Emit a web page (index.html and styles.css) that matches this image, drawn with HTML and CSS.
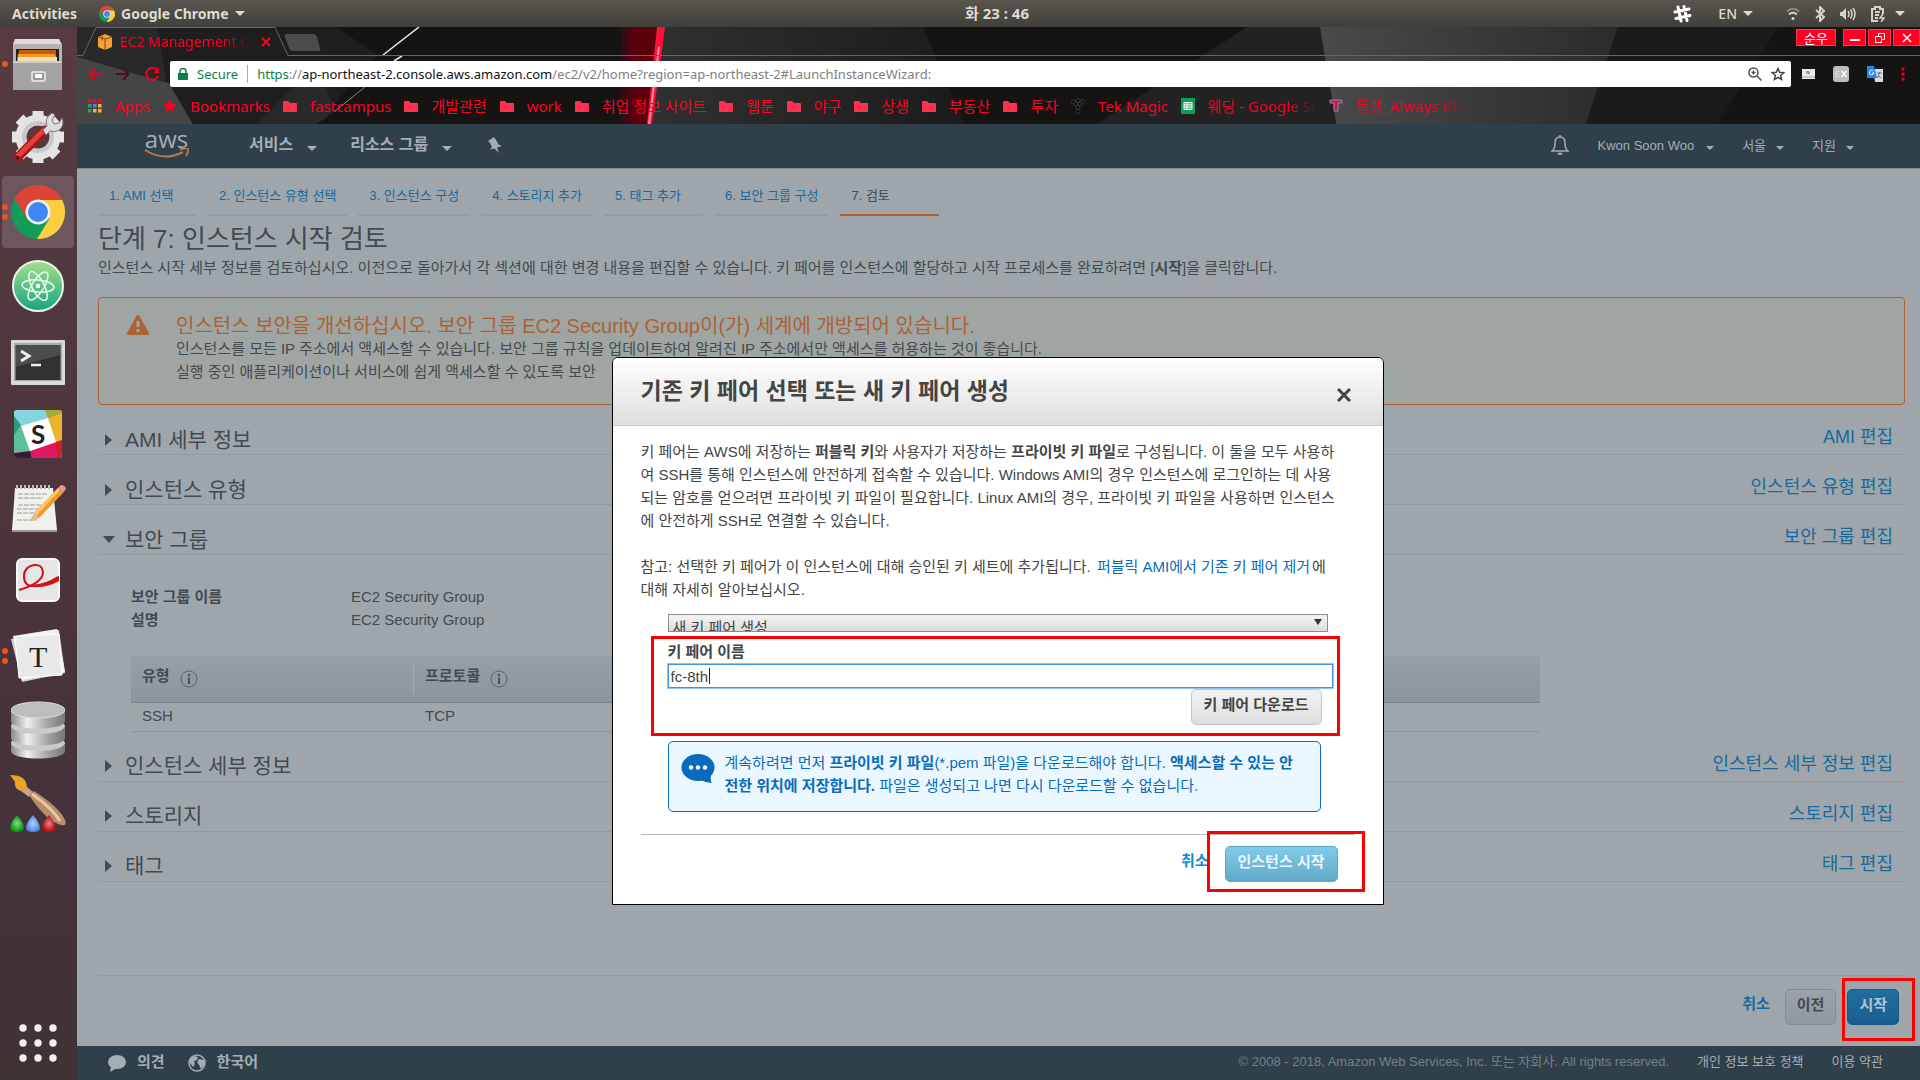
FILE: index.html
```
<!DOCTYPE html>
<html lang="ko">
<head>
<meta charset="utf-8">
<title>EC2 Management Console</title>
<link rel="stylesheet" href="styles.css">
</head>
<body>
<svg class="defs" width="0" height="0" aria-hidden="true">
  <defs>
    <symbol id="folder" viewBox="0 0 14 14"><path d="M0 3q0-1 1-1h4l2 2h6q1 0 1 1v7q0 1-1 1H1q-1 0-1-1z" fill="#ff2f4e"/></symbol>
    <symbol id="chrome" viewBox="0 0 54 54">
      <circle cx="27" cy="27" r="27" fill="#109d58"/>
      <path d="M3.600 13.500A27 27 0 0 1 50.400 13.500L52 15H27L15.500 33.500z" fill="#db4437"/>
      <path d="M51.200 15A27 27 0 0 1 26 54L38.500 33.500 27 15z" fill="#ffcd40"/>
      <circle cx="27" cy="27" r="12.500" fill="#f1f1f1"/><circle cx="27" cy="27" r="10" fill="#4285f4"/>
    </symbol>
    <symbol id="info" viewBox="0 0 18 18"><circle cx="9" cy="9" r="8" fill="none" stroke="#5d656b" stroke-width="1"/><path d="M9 7.500V14" stroke="#474f55" stroke-width="2"/><circle cx="9" cy="5" r="1.300" fill="#474f55"/></symbol>
  </defs>
</svg>

<header class="topbar">
  <div class="top-left">
    <span>Activities</span>
    <span class="app-menu"><svg width="16" height="16"><use href="#chrome"/></svg>Google Chrome<i class="tri"></i></span>
  </div>
  <time class="clock">화 23 : 46</time>
  <div class="top-right">
    <svg width="20" height="20" viewBox="0 0 20 20" stroke="#fff" stroke-width="3" stroke-linecap="round"><path d="M6 3l3 14M12 2.500l3 14M3 8l14-3M4 14.500l14-3"/></svg>
    <span class="lang">EN<i class="tri"></i></span>
    <svg width="14" height="14" viewBox="0 0 14 14" fill="none" stroke="#d4d2cc" stroke-width="2"><path d="M1 4.500Q7-1 13 4.500" stroke="#8e8b83"/><path d="M3 7.500Q7 4 11 7.500"/><circle cx="7" cy="11.500" r="1.500" fill="#d4d2cc" stroke="none"/></svg>
    <svg width="10" height="16" viewBox="0 0 10 16" fill="none" stroke="#d4d2cc" stroke-width="2"><path d="M1 4l8 7-4 4V1l4 4-8 7"/></svg>
    <svg width="16" height="14" viewBox="0 0 16 14" fill="none" stroke="#d4d2cc" stroke-width="1.500"><path d="M0 5h2l4-4v12L2 9H0z" fill="#d4d2cc" stroke="none"/><path d="M8 4q2 3 0 6M10.500 2.500q3 4.500 0 9M13 1q4 6 0 12"/></svg>
    <svg width="14" height="16" viewBox="0 0 14 16" fill="none" stroke="#d4d2cc" stroke-width="2"><path d="M12 8V3H9V1H4v2H1v12h6M4 6h5M4 9h4M4 12h3"/><path d="M12 8l-3 4h4l-3 4" stroke-width="1.500"/></svg>
    <i class="tri"></i>
  </div>
</header>

<div class="desktop">
<nav class="dock" aria-label="Launcher">
  <button class="launch one" aria-label="Files"><svg width="54" height="54" viewBox="0 0 54 54"><path d="M4 2h44l3 5v45H2V6z" fill="#b3b3b3"/><path d="M4 2h44l2 5H3z" fill="#dcdcdc"/><path d="M5 12h43v12H5z" fill="#222"/><path d="M8 13h37v12H7z" fill="#c85a10"/><path d="M7 17h36l2 2v6H6z" fill="#f39a2d"/><path d="M7 20h39v4H7z" fill="#f8dfae"/><path d="M2 24h49v29H2z" fill="#a3a3a3"/><path d="M2 24h49v2H2z" fill="#ccc"/><rect x="21" y="35" width="13" height="9" rx="2" fill="#999" stroke="#ddd" stroke-width="2"/><rect x="24" y="37" width="7" height="4" fill="#fff"/></svg></button>
  <button class="launch" aria-label="Settings"><svg width="54" height="54" viewBox="0 0 54 54"><circle cx="27" cy="26" r="17" fill="none" stroke="#e4e4e4" stroke-width="11"/><path d="M27 0v9M27 43v9M1 26h9M44 26h9M8.500 7.500l7 7M38.500 37.500l7 7M8.500 44.500l7-7M38.500 14.500l7-7" stroke="#e4e4e4" stroke-width="11"/><circle cx="27" cy="26" r="14" fill="none" stroke="#c8c8c8" stroke-width="4"/><path d="M7 46L34 19" stroke="#a61818" stroke-width="9" stroke-linecap="round"/><path d="M7 45L33 19" stroke="#e0413a" stroke-width="5" stroke-linecap="round"/><circle cx="6.500" cy="46.500" r="2" fill="#631414"/><path d="M32 19l4-4q-3-8 5-13l3 2-3 5 2 4 5-1 3-5q3 8-3 12-4 3-9 1l-4 4z" fill="#ddd" stroke="#777" stroke-width="1"/></svg></button>
  <button class="launch two active" aria-label="Google Chrome"><svg width="54" height="54"><use href="#chrome"/></svg></button>
  <button class="launch" aria-label="Atom"><svg width="52" height="52" viewBox="0 0 52 52"><defs><linearGradient id="atom" x2="0" y2="1"><stop stop-color="#a8dd8d"/><stop offset="1" stop-color="#14a77c"/></linearGradient></defs><circle cx="26" cy="26" r="25" fill="url(#atom)" stroke="#e8f4ec" stroke-width="2"/><g fill="none" stroke="#ecfbef" stroke-width="1.500"><ellipse cx="26" cy="26" rx="16" ry="6" transform="rotate(5 26 26)"/><ellipse cx="26" cy="26" rx="16" ry="6" transform="rotate(62 26 26)"/><ellipse cx="26" cy="26" rx="16" ry="6" transform="rotate(122 26 26)"/></g><circle cx="26" cy="26" r="2.200" fill="#fff"/></svg></button>
  <button class="launch" aria-label="Terminal"><svg width="54" height="52" viewBox="0 -6 54 52"><rect width="54" height="45" rx="1" fill="#d9d9d9"/><rect x="3" y="3" width="48" height="38" fill="#aaa"/><rect x="4.500" y="5" width="45" height="35" fill="#2f3132"/><path d="M5 5h44v10L5 27z" fill="#4a4c4d"/><path d="M10 11l8 5-8 5" fill="none" stroke="#eee" stroke-width="3"/><path d="M20 25h10" stroke="#eee" stroke-width="2.500"/></svg></button>
  <button class="launch" aria-label="Slack"><svg width="48" height="48" viewBox="0 0 48 48"><rect width="48" height="48" rx="3" fill="#ecb32d"/><path d="M0 3q0-3 3-3h28l3 8L7 16 0 14z" fill="#85d5e0"/><path d="M31 0h14q3 0 3 3L34 8z" fill="#9fae3b"/><path d="M0 14l7 2 9 25-16 2z" fill="#5cc09b"/><path d="M0 6l7 9-7 10z" fill="#2c9a78"/><path d="M16 41l27-9 5 16H18z" fill="#e01765"/><path d="M42 32l6-2v15l-5 3z" fill="#d01d28"/><path d="M0 43l16-2 2 7H3q-3 0-3-3z" fill="#391a3a"/><path d="M7 16l27-8 8 24-26 9z" fill="#fff"/><text x="17" y="34" class="slack-s">S</text></svg></button>
  <button class="launch" aria-label="Text Editor"><svg width="56" height="50" viewBox="0 0 56 50"><path d="M5 5h38l4 42H2z" fill="#f1f1ec"/><path d="M2 47h45v2H2z" fill="#9a9a93"/><path d="M7 6V2M11 6V2M15 6V2M19 6V2M23 6V2M27 6V2M31 6V2M35 6V2M39 6V2" stroke="#bbb" stroke-width="2"/><path d="M8 11h30M8 15h25M8 22h26M7 26h28M7 30h25M7 37h20" stroke="#b9b9b2" stroke-width="1.500" stroke-dasharray="5 1"/><path d="M20 38l5-9L48 5l5 5-24 25z" fill="#f19a2c"/><path d="M25 29l23-24 2 2-24 26z" fill="#ffc46b"/><path d="M48 5l3-3q4 0 5 4l-3 4z" fill="#e59595"/><path d="M20 38l5-9 4 6z" fill="#d7c09a"/></svg></button>
  <button class="launch" aria-label="Document Viewer"><svg width="44" height="48" viewBox="0 0 44 48"><rect x="1" y="1" width="42" height="42" rx="5" fill="#e6e6e6" stroke="#f8f8f8" stroke-width="2"/><path d="M3 32Q27 25 27 14 26 6 18 7 8 9 8 18 8 28 17 28 30 27 42 19" fill="none" stroke="#d1121a" stroke-width="2"/><path d="M17 27q13-1 26-9v5q-12 7-26 6z" fill="#d1121a"/></svg></button>
  <button class="launch two" aria-label="Typora"><svg width="56" height="54" viewBox="0 0 56 54"><path d="M1 10l48-9 6 43-43 9z" fill="#d5d5d5"/><path d="M3 7l44-7 8 43-43 8z" fill="#f3f3f3"/><path d="M5 8l44-3 3 41-43 3z" fill="#e9e9e9" stroke="#fff"/><text x="19" y="38" class="typora-t">T</text></svg></button>
  <button class="launch" aria-label="Database"><svg width="54" height="58" viewBox="0 0 54 58"><defs><linearGradient id="db"><stop stop-color="#8a8a8a"/><stop offset=".3" stop-color="#efefef"/><stop offset=".7" stop-color="#a0a0a0"/><stop offset="1" stop-color="#777"/></linearGradient></defs><path d="M0 42v8c0 10 54 10 54 0v-8z" fill="url(#db)"/><ellipse cx="27" cy="42" rx="27" ry="8" fill="#c9c9c9"/><path d="M0 26v11c0 10 54 10 54 0V26z" fill="url(#db)"/><ellipse cx="27" cy="25" rx="27" ry="8" fill="#c9c9c9"/><path d="M0 9v11c0 10 54 10 54 0V9z" fill="url(#db)"/><ellipse cx="27" cy="9" rx="27" ry="8" fill="#bdbdbd" stroke="#dcdcdc"/></svg></button>
  <button class="launch" aria-label="Paint"><svg width="58" height="60" viewBox="0 0 58 60"><defs><radialGradient id="dg"><stop stop-color="#7be07f"/><stop offset="1" stop-color="#0a8f12"/></radialGradient><radialGradient id="dbl"><stop stop-color="#b7d4ff"/><stop offset="1" stop-color="#4a86ea"/></radialGradient><radialGradient id="dr"><stop stop-color="#f07f7f"/><stop offset="1" stop-color="#b00b10"/></radialGradient></defs><path d="M1 1q17 0 17 13l-6 3Q5 15 6 8z" fill="#e8a426"/><path d="M12 17l6-4 6 5-4 5z" fill="#c7a487"/><path d="M20 21l5-4q26 17 31 29 3 8-7 4-14-6-29-29z" fill="#b98d68"/><path d="M23 20q20 14 28 27" stroke="#e5c7a5" stroke-width="3" fill="none"/><path d="M8 41q-14 17 0 17t0-17z" fill="url(#dg)"/><path d="M24 41q-14 17 0 17t0-17z" fill="url(#dbl)"/><path d="M40 41q-14 17 0 17t0-17z" fill="url(#dr)"/></svg></button>
  <button class="apps" aria-label="Show Applications"><svg width="38" height="38" viewBox="0 0 38 38" fill="#f1f0ee"><circle cx="4" cy="4" r="3.700"/><circle cx="19" cy="4" r="3.700"/><circle cx="34" cy="4" r="3.700"/><circle cx="4" cy="19" r="3.700"/><circle cx="19" cy="19" r="3.700"/><circle cx="34" cy="19" r="3.700"/><circle cx="4" cy="34" r="3.700"/><circle cx="19" cy="34" r="3.700"/><circle cx="34" cy="34" r="3.700"/></svg></button>
</nav>

<div class="window">
<div class="browser">
  <svg class="theme" viewBox="0 0 1843 97" preserveAspectRatio="none" aria-hidden="true">
    <defs>
      <linearGradient id="g1"><stop stop-color="#303030"/><stop offset="1" stop-color="#1b1b1b"/></linearGradient>
      <linearGradient id="g2"><stop stop-color="#4a4a4a"/><stop offset="1" stop-color="#2b2b2b"/></linearGradient>
      <linearGradient id="g3"><stop stop-color="#191515"/><stop offset=".4" stop-color="#5c000e"/><stop offset="1" stop-color="#5c000e"/></linearGradient>
    </defs>
    <rect width="1843" height="97" fill="#151413"/>
    <path d="M0 15L50 40 92 56 116 97H0z" fill="#454545"/>
    <path d="M70 0h190l40 28-60 69H116L92 56z" fill="#1e1e1e"/>
    <path d="M0 0h80l10 56L0 30z" fill="#292929"/>
    <path d="M258 84L240 97H180l60-60z" fill="#292929"/>
    <path d="M545 0h35l-9 97h-30z" fill="url(#g3)"/>
    <path d="M584 0h262l42 97H573z" fill="url(#g1)"/>
    <path d="M1170 0h74l14 97H1020z" fill="#222"/>
    <path d="M1243 0h298l-32 97h-250z" fill="url(#g2)"/>
    <path d="M1541 0h160l-60 97h-132z" fill="#1b1b1b"/>
    <path d="M342 0l-36 28M325 29l-8 5" stroke="#eee" stroke-width="1.500"/>
    <path d="M288 60l-30 24" stroke="#888"/>
    <path d="M580 0h8l-13 97h-5z" fill="#ff1238"/>
    <path d="M582 20l-10 77" stroke="#ff8aa0" stroke-width="2"/>
    <path d="M0 28.500H6L19 .5H198L211 28.500H1843" fill="none" stroke="#666"/>
    <path d="M209 7h27q3 0 4 3l3 11q1 3-2 3h-25q-3 0-4-3l-4-11q-1-3 1-3z" fill="#4c4c4c"/>
  </svg>
  <div class="tabstrip">
    <div class="tab">
      <svg width="14" height="16" viewBox="0 0 14 16"><path d="M0 3l7-3 7 3v10l-7 3-7-3z" fill="#f7a134"/><path d="M0 3l7 2 7-2M7 5v11M4 1.500v5" stroke="#7b4a0d" fill="none"/></svg>
      <span class="tab-title">EC2 Management Console</span>
      <button class="tab-close" aria-label="Close tab"><svg width="10" height="10" viewBox="0 0 10 10" stroke="#ff0022" stroke-width="2"><path d="M1 1l8 8M9 1L1 9"/></svg></button>
    </div>
    <div class="win-buttons">
      <button class="user">순우</button>
      <button aria-label="Minimize"><svg width="10" height="10" viewBox="0 0 10 10"><path d="M0 7h10" stroke="#fff" stroke-width="2"/></svg></button>
      <button aria-label="Restore"><svg width="10" height="10" viewBox="0 0 10 10" fill="none" stroke="#fff"><path d="M.5 3.500h6v6h-6zM3.500 3V.5h6v6H7"/></svg></button>
      <button class="close" aria-label="Close"><svg width="10" height="10" viewBox="0 0 10 10" stroke="#fff" stroke-width="1.500"><path d="M1 1l8 8M9 1L1 9"/></svg></button>
    </div>
  </div>
  <div class="toolbar">
    <button aria-label="Back"><svg width="14" height="14" viewBox="0 0 14 14" fill="none" stroke="#f00020" stroke-width="2"><path d="M14 7H2M7 1L1.500 7 7 13"/></svg></button>
    <button aria-label="Forward"><svg width="14" height="14" viewBox="0 0 14 14" fill="none" stroke="#4e1018" stroke-width="2"><path d="M0 7h12M7 1l5.500 6L7 13"/></svg></button>
    <button aria-label="Reload"><svg width="16" height="16" viewBox="0 0 16 16" fill="none" stroke="#f00020" stroke-width="2"><path d="M14 10A6 6 0 1 1 13 4"/><path d="M15 1v6H9z" fill="#f00020" stroke="none"/></svg></button>
    <div class="address">
      <svg width="10" height="12" viewBox="0 0 10 12"><path d="M0 5h10v7H0z" fill="#0b8043"/><path d="M2 5V3.500a3 3 0 0 1 6 0V5" fill="none" stroke="#0b8043" stroke-width="1.500"/></svg>
      <span class="secure">Secure</span>
      <span class="url"><b class="secure">https</b>://<b>ap-northeast-2.console.aws.amazon.com</b>/ec2/v2/home?region=ap-northeast-2#LaunchInstanceWizard:</span>
      <svg width="14" height="14" viewBox="0 0 14 14" fill="none" stroke="#505050" stroke-width="1.500"><circle cx="5.500" cy="5.500" r="4.500"/><path d="M9 9l4.500 4.500M3.500 5.500h4M5.500 3.500v4"/></svg>
      <svg width="14" height="14" viewBox="0 0 14 14" fill="none" stroke="#444" stroke-width="1.500"><path d="M7 1.500l1.700 3.800 4 .4-3 2.700.9 4.100L7 10.400l-3.600 2.100.9-4.100-3-2.700 4-.4z"/></svg>
    </div>
    <div class="extensions">
      <svg width="13" height="10" viewBox="0 0 13 10"><path d="M0 0h13v10H0z" fill="#e9e9e9"/><path d="M0 8h13" stroke="#aaa"/><path d="M5 5V2l2 3V2" stroke="#777" fill="none"/></svg>
      <svg width="16" height="16" viewBox="0 0 16 16"><rect width="16" height="16" rx="3" fill="#bdbdbd"/><path d="M6.500 5.500H3v5h3.500M3 8h3" stroke="#ddd" fill="none"/><path d="M8.500 5l5 6M13.500 5l-5 6" stroke="#fff" stroke-width="1.500" fill="none"/></svg>
      <svg width="16" height="16" viewBox="0 0 16 16"><path d="M6 3h10v13H8z" fill="#d5dbe0"/><path d="M0 0h7l3 12H0z" fill="#1e88f0"/><path d="M6.500 5A2.300 2.300 0 1 0 7 7H5" stroke="#fff" fill="none"/><path d="M10 7h5M12.500 6v1l-2 5M11 9l3 3" stroke="#5b7480" fill="none"/></svg>
      <svg width="4" height="14" viewBox="0 0 4 14" fill="#e00020"><circle cx="2" cy="2" r="1.700"/><circle cx="2" cy="7" r="1.700"/><circle cx="2" cy="12" r="1.700"/></svg>
    </div>
  </div>
  <nav class="bookmarks" aria-label="Bookmarks">
    <a href="#"><svg width="14" height="14" viewBox="0 0 14 14"><path d="M0 0h3.500v3.500H0zM5 0h3.500v3.500H5zM10 0h3.500v3.500H10z" fill="#f4003c"/><path d="M0 5h3.500v3.500H0zM0 10h3.500v3.500H0z" fill="#1fa463"/><path d="M5 5h3.500v3.500H5z" fill="#2f8df5"/><path d="M10 5h3.500v3.500H10zM5 10h3.500v3.500H5zM10 10h3.500v3.500H10z" fill="#f7b32b"/></svg><span>Apps</span></a>
    <a href="#"><svg width="14" height="14" viewBox="0 0 14 14"><path d="M7 0l2 5h5l-4 3.500 1.500 5L7 10.500 2.500 13.500 4 8.500 0 5h5z" fill="#ff0022"/></svg><span>Bookmarks</span></a>
    <a href="#"><svg width="14" height="14"><use href="#folder"/></svg><span>fastcampus</span></a>
    <a href="#"><svg width="14" height="14"><use href="#folder"/></svg><span>개발관련</span></a>
    <a href="#"><svg width="14" height="14"><use href="#folder"/></svg><span>work</span></a>
    <a href="#"><svg width="14" height="14"><use href="#folder"/></svg><span>취업 정보 사이트</span></a>
    <a href="#"><svg width="14" height="14"><use href="#folder"/></svg><span>웹툰</span></a>
    <a href="#"><svg width="14" height="14"><use href="#folder"/></svg><span>야구</span></a>
    <a href="#"><svg width="14" height="14"><use href="#folder"/></svg><span>상생</span></a>
    <a href="#"><svg width="14" height="14"><use href="#folder"/></svg><span>부동산</span></a>
    <a href="#"><svg width="14" height="14"><use href="#folder"/></svg><span>투자</span></a>
    <a href="#"><svg width="14" height="16" viewBox="0 0 14 16" fill="#0a0a0a" stroke="#4a4a4a" stroke-width=".7"><circle cx="2.500" cy="4" r="2"/><circle cx="7" cy="2.500" r="2"/><circle cx="11.500" cy="4" r="2"/><circle cx="5" cy="6" r="2"/><circle cx="9" cy="6" r="2"/><circle cx="7" cy="9.500" r="2"/><circle cx="7" cy="13.500" r="2"/></svg><span>Tek Magic</span></a>
    <a href="#"><svg width="14" height="16" viewBox="0 0 14 16"><rect width="14" height="16" rx="1" fill="#0f9d58"/><path d="M3 4.500h8v7H3zM3 8h8M6 4.500v7M3 6.200h8M3 9.800h8" fill="none" stroke="#fff"/></svg><span class="fade">웨딩 - Google Sheets</span></a>
    <a href="#"><svg width="14" height="14" viewBox="0 0 14 14"><path d="M1 1h12v3h-4v8H5V4H1z" fill="#e0103a" stroke="#6f8fc4"/></svg><span class="fade">동행_Always KIA</span></a>
  </nav>
</div>

<header class="aws-nav">
  <a class="logo" href="#" aria-label="aws"><span>aws</span><svg width="45" height="12" viewBox="0 0 45 12" fill="none" stroke="#b47a45" stroke-width="2"><path d="M1 2q19 12 38 2"/><path d="M36 1.500q7-2 8-.5t-2 7"/></svg></a>
  <a class="menu" href="#">서비스<i class="tri"></i></a>
  <a class="menu" href="#">리소스 그룹<i class="tri"></i></a>
  <svg class="pin" width="14" height="16" viewBox="0 0 14 16"><path d="M6 0L0 4l2 2 2 4-2 2.500 4.500-1L11 16 9 10.500l5-1.500-3.500-1.500L8 3z" fill="#a4aeb5"/></svg>
  <svg class="bell" width="18" height="20" viewBox="0 0 18 20" fill="none" stroke="#a4aeb5" stroke-width="1.500"><path d="M9 0v2M1 16q3-2 3-8 0-6 5-6t5 6q0 6 3 8z"/><path d="M7 18q2 2 4 0" stroke-width="2"/></svg>
  <a class="small" href="#">Kwon Soon Woo<i class="tri"></i></a>
  <a class="small" href="#">서울<i class="tri"></i></a>
  <a class="small" href="#">지원<i class="tri"></i></a>
</header>

<main class="page">
  <nav class="steps" aria-label="Steps">
    <a href="#">1. AMI 선택</a><a href="#">2. 인스턴스 유형 선택</a><a href="#">3. 인스턴스 구성</a><a href="#">4. 스토리지 추가</a><a href="#">5. 태그 추가</a><a href="#">6. 보안 그룹 구성</a><a class="current" href="#">7. 검토</a>
  </nav>
  <h1>단계 7: 인스턴스 시작 검토</h1>
  <p class="lead">인스턴스 시작 세부 정보를 검토하십시오. 이전으로 돌아가서 각 섹션에 대한 변경 내용을 편집할 수 있습니다. 키 페어를 인스턴스에 할당하고 시작 프로세스를 완료하려면 [<b>시작</b>]을 클릭합니다.</p>
  <section class="alert">
    <svg width="22" height="20" viewBox="0 0 22 20"><path d="M11 1.500L20.500 18.500H1.500z" fill="#ad6236" stroke="#ad6236" stroke-width="3" stroke-linejoin="round"/><path d="M11 6v6M11 14v3" stroke="#a2a7a4" stroke-width="3"/></svg>
    <div>
      <h2>인스턴스 보안을 개선하십시오. 보안 그룹 EC2 Security Group이(가) 세계에 개방되어 있습니다.</h2>
      <p>인스턴스를 모든 IP 주소에서 액세스할 수 있습니다. 보안 그룹 규칙을 업데이트하여 알려진 IP 주소에서만 액세스를 허용하는 것이 좋습니다.<br>실행 중인 애플리케이션이나 서비스에 쉽게 액세스할 수 있도록 보안</p>
    </div>
  </section>
  <section class="row"><i class="arrow"></i><h3>AMI 세부 정보</h3><a href="#">AMI 편집</a></section>
  <section class="row"><i class="arrow"></i><h3>인스턴스 유형</h3><a href="#">인스턴스 유형 편집</a></section>
  <section class="row"><i class="arrow open"></i><h3>보안 그룹</h3><a href="#">보안 그룹 편집</a></section>
  <div class="group">
    <dl>
      <dt>보안 그룹 이름</dt><dd>EC2 Security Group</dd>
      <dt>설명</dt><dd>EC2 Security Group</dd>
    </dl>
    <table>
      <thead><tr><th><span>유형<svg width="18" height="18"><use href="#info"/></svg></span></th><th><span>프로토콜<svg width="18" height="18"><use href="#info"/></svg></span></th></tr></thead>
      <tbody><tr><td>SSH</td><td>TCP</td></tr></tbody>
    </table>
  </div>
  <section class="row"><i class="arrow"></i><h3>인스턴스 세부 정보</h3><a href="#">인스턴스 세부 정보 편집</a></section>
  <section class="row"><i class="arrow"></i><h3>스토리지</h3><a href="#">스토리지 편집</a></section>
  <section class="row"><i class="arrow"></i><h3>태그</h3><a href="#">태그 편집</a></section>
  <div class="actions">
    <a href="#">취소</a>
    <button class="btn dim">이전</button>
    <span class="marked"><button class="btn dim-primary">시작</button></span>
  </div>

  <div class="modal" role="dialog" aria-labelledby="dlg-title">
    <header>
      <h2 id="dlg-title">기존 키 페어 선택 또는 새 키 페어 생성</h2>
      <button class="x" aria-label="Close"><svg width="14" height="14" viewBox="0 0 14 14" stroke="#444" stroke-width="3"><path d="M1 1l12 12M13 1L1 13"/></svg></button>
    </header>
    <div class="modal-body">
      <p>키 페어는 AWS에 저장하는 <b>퍼블릭 키</b>와 사용자가 저장하는 <b>프라이빗 키 파일</b>로 구성됩니다. 이 둘을 모두 사용하<br>여 SSH를 통해 인스턴스에 안전하게 접속할 수 있습니다. Windows AMI의 경우 인스턴스에 로그인하는 데 사용<br>되는 암호를 얻으려면 프라이빗 키 파일이 필요합니다. Linux AMI의 경우, 프라이빗 키 파일을 사용하면 인스턴스<br>에 안전하게 SSH로 연결할 수 있습니다.</p>
      <p>참고: 선택한 키 페어가 이 인스턴스에 대해 승인된 키 세트에 추가됩니다. <a href="#">퍼블릭 AMI에서 기존 키 페어 제거</a>에<br>대해 자세히 알아보십시오.</p>
      <form class="key-form">
        <div class="select-wrap"><select aria-label="키 페어 옵션"><option>새 키 페어 생성</option></select></div>
        <div class="name-field">
          <label for="key-name">키 페어 이름</label>
          <div class="input-wrap"><input id="key-name" type="text" value="fc-8th"><i class="caret"></i></div>
          <button type="button" class="btn">키 페어 다운로드</button>
        </div>
        <div class="note">
          <svg width="34" height="30" viewBox="0 0 34 30"><ellipse cx="17" cy="13.500" rx="16.500" ry="13.500" fill="#0a6bbd"/><path d="M20 26q6-1 10-5-1 5 1 8-6 0-11-3z" fill="#0a6bbd"/><circle cx="10" cy="13.500" r="2.200" fill="#fff"/><circle cx="17" cy="13.500" r="2.200" fill="#fff"/><circle cx="24" cy="13.500" r="2.200" fill="#fff"/></svg>
          <p>계속하려면 먼저 <b>프라이빗 키 파일</b>(*.pem 파일)을 다운로드해야 합니다. <b>액세스할 수 있는 안<br>전한 위치에 저장합니다.</b> 파일은 생성되고 나면 다시 다운로드할 수 없습니다.</p>
        </div>
      </form>
      <footer>
        <a href="#">취소</a>
        <span class="marked"><button class="btn primary">인스턴스 시작</button></span>
      </footer>
    </div>
  </div>
</main>

<footer class="aws-footer">
  <a class="strong" href="#"><svg width="18" height="18" viewBox="0 0 18 18"><ellipse cx="9" cy="8" rx="9" ry="7" fill="#a4aeb5"/><path d="M3 12l-1 6 7-4z" fill="#a4aeb5"/></svg>의견</a>
  <a class="strong" href="#"><svg width="18" height="18" viewBox="0 0 18 18"><circle cx="9" cy="9" r="8" fill="none" stroke="#a4aeb5" stroke-width="1.500"/><path d="M2 5l4-3 4 1-1 3-3 1 1 3-2 3-3-4zM11 5l5 1 1 4-4 5-2-4-2-3z" fill="#a4aeb5"/></svg>한국어</a>
  <span class="copy">© 2008 - 2018, Amazon Web Services, Inc. 또는 자회사. All rights reserved.</span>
  <a href="#">개인 정보 보호 정책</a>
  <a href="#">이용 약관</a>
</footer>
</div>
</div>
</body>
</html>
```
FILE: styles.css
```
* { box-sizing: border-box; }
body {
  margin: 0;
  min-height: 100vh;
  display: flex;
  flex-direction: column;
  font: 15px/23px "Liberation Sans", "Noto Sans CJK KR", sans-serif;
  color: #434a50;
  background: #9ea6ac;
}
h1, h2, h3, p, dl, dd { margin: 0; }
a { text-decoration: none; color: inherit; }
button { font: inherit; color: inherit; border: 0; padding: 0; margin: 0; background: none; }
svg { display: block; flex: none; }
.defs { position: absolute; }
.tri {
  display: inline-block;
  border: 5px solid transparent;
  border-top-color: currentColor;
  border-bottom: 0;
}

/* desktop top bar */
.topbar {
  height: 27px;
  display: grid;
  grid-template-columns: 1fr auto 1fr;
  align-items: center;
  padding: 0 15px 0 12px;
  background: linear-gradient(#59564e, #403f3a);
  color: #dfdbd2;
  font: bold 14px/27px "Noto Sans", "Noto Sans CJK KR", sans-serif;
}
.top-left { display: flex; gap: 22px; }
.clock { margin-left: 77px; font-size: 15px; }
.app-menu, .lang { display: flex; align-items: center; gap: 6px; }
.top-right { display: flex; justify-content: flex-end; align-items: center; gap: 15px; }
.lang { margin: 0 18px 0 11px; font-weight: 500; }
.top-right > .tri { margin-left: -5px; }

.desktop { flex: 1; display: flex; }

/* launcher */
.dock {
  width: 77px;
  flex: none;
  display: flex;
  flex-direction: column;
  gap: 2px;
  padding: 1px 3px 0 2px;
  background: linear-gradient(#563c41, #4c343a 50%, #44323a 80%, #403334);
}
.launch {
  position: relative;
  height: 72px;
  border-radius: 4px;
  display: flex;
  align-items: center;
  justify-content: center;
}
.launch.active { background: #6d575c; }
.launch.one::before, .launch.two::before {
  content: "";
  position: absolute;
  left: 0;
  top: 33px;
  width: 6px;
  height: 6px;
  border-radius: 3px;
  background: #e95420;
}
.launch.two::before { top: 28px; box-shadow: 0 10px #e95420; }
.slack-s { font: bold 26px "Lato", sans-serif; fill: #222; }
.typora-t { font: 30px "Liberation Serif", serif; fill: #222; }
.apps { margin: auto 0 18px; display: flex; justify-content: center; }

/* browser chrome */
.window { flex: 1; min-width: 0; display: flex; flex-direction: column; }
.browser {
  position: relative;
  height: 97px;
  color: #ff0022;
  font: 15px/26px "Noto Sans", "Noto Sans CJK KR", sans-serif;
}
.theme { position: absolute; inset: 0; width: 100%; height: 100%; }
.tabstrip { position: relative; height: 34px; display: flex; justify-content: space-between; }
.tab { display: flex; align-items: center; height: 30px; width: 198px; padding: 0 4px 0 21px; gap: 8px; font-size: 14px; }
.tab-title, .fade {
  overflow: hidden;
  white-space: nowrap;
  -webkit-mask-image: linear-gradient(90deg, #000 75%, transparent);
  mask-image: linear-gradient(90deg, #000 75%, transparent);
}
.tab-title { width: 133px; flex: none; }
.win-buttons { display: flex; gap: 2px; padding-top: 2px; }
.win-buttons button {
  width: 23px;
  height: 17px;
  display: flex;
  align-items: center;
  justify-content: center;
  background: #ff0022;
  border: 1px solid #ff3550;
  color: #fff;
}
.win-buttons .user { width: 40px; margin-right: 5px; font-size: 13px; }
.win-buttons .close { width: 27px; }
.toolbar { position: relative; display: flex; align-items: center; height: 26px; padding-left: 11px; }
.toolbar > button { margin-right: 14px; }
.toolbar > button:nth-child(3) { margin-right: 10px; }
.address {
  flex: 1;
  min-width: 0;
  height: 26px;
  display: flex;
  align-items: center;
  gap: 9px;
  padding: 0 6px 0 8px;
  background: #fff;
  color: #808080;
  border-radius: 2px;
  font-size: 13px;
}
.address .secure { color: #0b8043; }
.url { flex: 1; border-left: 1px solid #aaa; padding-left: 9px; line-height: 18px; white-space: nowrap; overflow: hidden; }
.url b { font-weight: 400; color: #111; }
.extensions { display: flex; align-items: center; gap: 18px; padding: 0 15px 0 11px; }
.bookmarks { position: relative; display: flex; align-items: center; gap: 13px; height: 37px; padding: 0 0 0 11px; }
.bookmarks a { display: flex; align-items: center; gap: 13px; white-space: nowrap; }
.fade { width: 108px; }

/* console navigation */
.aws-nav {
  height: 45px;
  display: flex;
  align-items: center;
  padding: 0 66px 2px 67px;
  background: #30404b;
  border-bottom: 1px solid #7f888f;
  color: #a4aeb5;
  white-space: nowrap;
}
.logo { display: flex; flex-direction: column; width: 45px; margin-right: 60px; align-items: center; }
.logo span { font: 24px/18px "Open Sans", sans-serif; }
.menu { font-size: 16px; font-weight: bold; padding-bottom: 2px; display: flex; align-items: center; gap: 14px; margin-right: 33px; }
.menu .tri { border-width: 5px 5px 0; margin-top: 8px; }
.small .tri { border-width: 4px 4px 0; margin-top: 6px; }
.pin { margin-left: 3px; }
.bell { margin: 0 29px 0 auto; }
.small { font-size: 13px; display: flex; align-items: center; gap: 10px; margin-left: 28px; }
.bell + .small { margin-left: 0; gap: 12px; }

/* wizard page */
.page { position: relative; flex: 1; padding: 9px 15px 22px 21px; display: flex; flex-direction: column; }
.page a { color: #176a9b; }
.steps { display: flex; gap: 11px; font-size: 13px; line-height: 36px; }
.steps a { min-width: 99px; padding: 0 11px; border-bottom: 2px solid #949ca3; }
.steps .current { color: #434a50; border-color: #ad6236; }
.page h1 { font-size: 26px; line-height: 34px; font-weight: 400; margin-top: 6px; }
.lead { line-height: 23px; }
.alert {
  display: flex;
  gap: 27px;
  height: 108px;
  margin: 18px 0 22px;
  padding: 17px 28px;
  border: 1px solid #ad6236;
  border-radius: 4px;
  background: #9fa5a2;
}
.alert h2 { font-size: 20px; line-height: 22px; font-weight: 400; color: #ad6236; }
.row {
  display: flex;
  align-items: center;
  height: 28px;
  margin-bottom: 22px;
  padding: 0 12px 0 7px;
  border-bottom: 1px solid #9098a0;
}
.row h3 { font-size: 21px; line-height: 24px; padding-bottom: 2px; font-weight: 400; flex: 1; }
.row a { font-size: 18px; margin-bottom: 6px; }
.arrow { width: 20px; flex: none; padding-bottom: 2px; }
.arrow::before { content: ""; display: block; width: 0; border: 6px solid transparent; border-left: 7px solid #434a50; border-right: 0; }
.arrow.open { margin-left: -2px; width: 22px; }
.arrow.open::before { border: 6px solid transparent; border-top: 7px solid #434a50; border-bottom: 0; }
.group { margin: 8px 0 22px 33px; width: 78%; }
.group dl { display: grid; grid-template-columns: 220px 1fr; margin-bottom: 25px; }
dt { font-weight: bold; }
table { width: 100%; border-collapse: collapse; table-layout: fixed; }
th, td { text-align: left; padding: 0 11px; }
th:first-child, td:first-child { width: 283px; }
th { height: 46px; border-bottom: 1px solid #7c848b; }
th + th span { border-left: 1px solid #a5acb2; margin-left: -12px; padding-left: 11px; }
thead tr { background: linear-gradient(#979fa6, #8d959c); }
th span { display: flex; align-items: center; gap: 10px; padding-bottom: 6px; }
th svg { margin-top: 6px; }
td { height: 29px; padding-bottom: 3px; border-bottom: 1px solid #8d959c; }
.actions {
  margin-top: auto;
  height: 49px;
  display: flex;
  align-items: flex-start;
  justify-content: flex-end;
  padding: 13px 6px 0 0;
  gap: 11px;
  border-top: 1px solid #9098a0;
  font-weight: bold;
}
.actions a { margin: 3px 4px 0 0; }
.btn {
  height: 36px;
  padding: 0 12px 6px;
  border: 1px solid #c6c6c6;
  border-radius: 5px;
  background: linear-gradient(#f2f2f2, #dedede);
  font-weight: bold;
  color: #444;
  white-space: nowrap;
}
.actions .btn { padding: 0 11px 6px; }
.dim { background: linear-gradient(#9ba2a9, #90979e); border-color: #838b92; color: #434a50; }
.dim-primary { background: linear-gradient(#1f6f9f, #1b5e8e); border-color: #1b5983; color: #b4c4d0; }
.marked { position: relative; }
.marked::after, .name-field::after { content: ""; position: absolute; border: 3px solid #ff0000; pointer-events: none; }
.actions .marked::after { inset: -11px -16px -16px -5px; }

/* key pair dialog */
.modal {
  position: absolute;
  top: 188px;
  left: 50%;
  width: 772px;
  margin-left: -387px;
  background: #fff;
  border: 1px solid #000;
  border-radius: 6px 6px 0 0;
  color: #444;
}
.modal > header {
  display: flex;
  justify-content: space-between;
  align-items: center;
  height: 68px;
  padding: 0 32px 2px 28px;
  border-radius: 5px 5px 0 0;
  border-bottom: 1px solid #c4c4c4;
  background: linear-gradient(#fff, #dedede);
}
.modal h2 { font-size: 23px; line-height: 30px; }
.x { margin-top: 8px; }
.modal-body { padding: 14px 28px 0; }
.modal-body > p { margin-bottom: 23px; white-space: nowrap; }
.modal .modal-body > p a { color: #0a6bbd; margin: 0 2px; }
.key-form { margin: -10px 27px 0 27px; }
.select-wrap { position: relative; height: 18px; }
.select-wrap::after { content: ""; position: absolute; right: 6px; top: 5px; border: 4px solid transparent; border-top: 6px solid #333; border-bottom: 0; }
select {
  display: block;
  appearance: none;
  width: 100%;
  height: 18px;
  padding: 5px 4px 0;
  border: 1px solid #8c8c8c;
  border-radius: 0;
  background: linear-gradient(#f4f4f4, #dcdcdc);
  font: inherit;
  line-height: 16px;
  color: #444;
  overflow: hidden;
}
.name-field { position: relative; padding-top: 7px; height: 103px; margin-right: -5px; }
.name-field::after { inset: 4px -7px -1px -17px; }
.name-field label { display: block; font-weight: bold; line-height: 25px; }
.input-wrap { position: relative; }
input {
  display: block;
  width: 100%;
  height: 24px;
  padding: 0 2px;
  border: 1px solid #4195d8;
  box-shadow: 0 0 0 1px #8cc6f3;
  font: inherit;
  color: #444;
  background: #fff;
}
.caret { position: absolute; left: 41px; top: 4px; width: 1px; height: 16px; background: #222; }
.name-field .btn { display: block; margin: 1px 11px 0 auto; }
.note {
  display: flex;
  gap: 10px;
  height: 71px;
  margin: 6px 7px 0 0;
  padding: 9px 12px;
  border: 1px solid #0a6bbd;
  border-radius: 5px;
  background: #eaf7fe;
  color: #0a6bbd;
  white-space: nowrap;
}
.note svg { margin-top: 3px; }
.modal footer {
  display: flex;
  justify-content: flex-end;
  align-items: flex-start;
  gap: 16px;
  margin-top: 22px;
  height: 70px;
  padding: 11px 17px 0 0;
  border-top: 1px solid #b5b5b5;
  font-weight: bold;
}
.modal footer a { color: #0a8ad8; margin-top: 3px; }
.modal footer .btn { min-width: 113px; }
.modal footer .marked::after { inset: -15px -27px -10px -18px; }
.primary { background: linear-gradient(#80cbea, #62a9c9); border-color: #5fa5c4; color: #eaf7fe; }

/* console footer */
.aws-footer {
  height: 34px;
  display: flex;
  align-items: center;
  gap: 28px;
  padding: 0 37px 4px 31px;
  background: #30404b;
  color: #a4aeb5;
  font-size: 13px;
}
.strong { display: flex; align-items: center; gap: 11px; font-size: 15px; font-weight: bold; }
.strong + .strong { margin-left: -5px; }
.strong svg { margin-top: 4px; }
.copy { margin-left: auto; color: #72808a; }
```
